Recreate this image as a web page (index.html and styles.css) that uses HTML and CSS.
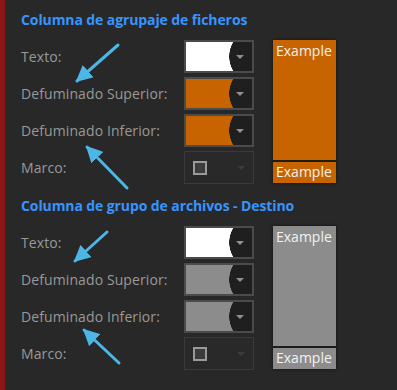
FILE: index.html
```html
<!DOCTYPE html>
<html lang="es">
<head>
  <meta charset="UTF-8">
  <title>Columnas</title>
  <link rel="stylesheet" href="styles.css">
</head>
<body>
  <div class="panel">

    <section class="group">
      <h2>Columna de agrupaje de ficheros</h2>
      <div class="group-body">
        <div class="rows">
          <div class="row">
            <span class="label">Texto:</span>
            <div class="picker" style="background-color: #ffffff"><span class="drop"><i class="caret"></i></span></div>
          </div>
          <div class="row">
            <span class="label">Defuminado Superior:</span>
            <div class="picker" style="background-color: #c86400"><span class="drop"><i class="caret"></i></span></div>
          </div>
          <div class="row">
            <span class="label">Defuminado Inferior:</span>
            <div class="picker" style="background-color: #c86400"><span class="drop"><i class="caret"></i></span></div>
          </div>
          <div class="row">
            <span class="label">Marco:</span>
            <div class="picker disabled"><span class="check"></span><span class="drop"><i class="caret"></i></span></div>
          </div>
        </div>
        <div class="preview orange">
          <div class="preview-top">Example</div>
          <div class="preview-bottom">Example</div>
        </div>
      </div>
    </section>

    <section class="group">
      <h2>Columna de grupo de archivos - Destino</h2>
      <div class="group-body">
        <div class="rows">
          <div class="row">
            <span class="label">Texto:</span>
            <div class="picker" style="background-color: #ffffff"><span class="drop"><i class="caret"></i></span></div>
          </div>
          <div class="row">
            <span class="label">Defuminado Superior:</span>
            <div class="picker" style="background-color: #8c8c8c"><span class="drop"><i class="caret"></i></span></div>
          </div>
          <div class="row">
            <span class="label">Defuminado Inferior:</span>
            <div class="picker" style="background-color: #8c8c8c"><span class="drop"><i class="caret"></i></span></div>
          </div>
          <div class="row">
            <span class="label">Marco:</span>
            <div class="picker disabled"><span class="check"></span><span class="drop"><i class="caret"></i></span></div>
          </div>
        </div>
        <div class="preview gray">
          <div class="preview-top">Example</div>
          <div class="preview-bottom">Example</div>
        </div>
      </div>
    </section>

    <!-- callout arrows drawn over the form -->
    <svg class="arrows" width="397" height="390" viewBox="0 0 397 390">
      <defs>
        <marker id="head" viewBox="0 0 10 10" refX="9" refY="5" markerWidth="5.5" markerHeight="5.5" orient="auto">
          <path d="M0 0 L10 5 L0 10 Z" fill="#4cb6e6"/>
        </marker>
      </defs>
      <g stroke="#4cb6e6" stroke-width="3" stroke-linecap="round" marker-end="url(#head)">
        <line x1="118" y1="45" x2="77" y2="81"/>
        <line x1="127" y1="188" x2="87" y2="147"/>
        <line x1="107" y1="232" x2="75" y2="261"/>
        <line x1="119" y1="363" x2="84" y2="330"/>
      </g>
    </svg>

  </div>
</body>
</html>
```

FILE: styles.css
```css
body {
  margin: 0;
  background-color: #282828;
  font-family: "Open Sans", "Noto Sans", sans-serif;
}

.panel {
  position: relative;
  height: 390px;
  border-left: 5px solid #8c1515;
  padding-left: 16px;
  box-sizing: border-box;
  overflow: hidden;
}

.group {
  padding-top: 10px;
  margin-bottom: 2px;
}

.group h2 {
  margin: 0 0 10px 0;
  font-size: 14px;
  line-height: 20px;
  font-weight: 700;
  color: #3794ff;
  letter-spacing: -0.1px;
}

.group-body {
  display: flex;
  align-items: flex-start;
  gap: 19px;
}

.rows {
  display: flex;
  flex-direction: column;
  gap: 4px;
}

.row {
  display: flex;
  align-items: center;
}

.label {
  width: 163px;
  font-size: 14px;
  letter-spacing: 0.1px;
  color: #999999;
}

.picker {
  display: flex;
  justify-content: flex-end;
  width: 66px;
  height: 29px;
  border: 2px solid #4b4b4b;
}

.drop {
  display: flex;
  align-items: center;
  justify-content: flex-end;
  width: 27px;
  padding-right: 8px;
  box-sizing: border-box;
  background: radial-gradient(circle 28px at 32px 50%, #1f1f1f 27.5px, transparent 28px);
}

.caret {
  width: 0;
  height: 0;
  border-left: 4px solid transparent;
  border-right: 4px solid transparent;
  border-top: 4px solid #909090;
  margin-top: 1px;
}

.picker.disabled {
  width: 68px;
  height: 31px;
  border: 1px solid #3a3a3a;
  background-color: #292929;
  align-items: center;
  justify-content: space-between;
}

.picker.disabled .drop {
  background: none;
}

.picker.disabled .caret {
  border-top-color: #3c3c3c;
}

.check {
  width: 10px;
  height: 10px;
  margin-left: 8px;
  border: 2px solid #9a9a9a;
  background-color: #3c3c3c;
}

.preview {
  display: flex;
  flex-direction: column;
  width: 63px;
  height: 143px;
  box-shadow: 0 0 3px rgba(0, 0, 0, 0.6);
  color: #f2f2f2;
  font-size: 14px;
  line-height: 20px;
}

.preview-top {
  flex: 1;
  padding: 1px 0 0 3px;
  border-bottom: 2px solid #1c1c1c;
}

.preview-bottom {
  height: 21px;
  padding-left: 3px;
}

.preview.orange {
  background-color: #c86400;
}

.preview.gray {
  background-color: #8c8c8c;
}

.arrows {
  position: absolute;
  left: -5px;
  top: 0;
  pointer-events: none;
}
```
